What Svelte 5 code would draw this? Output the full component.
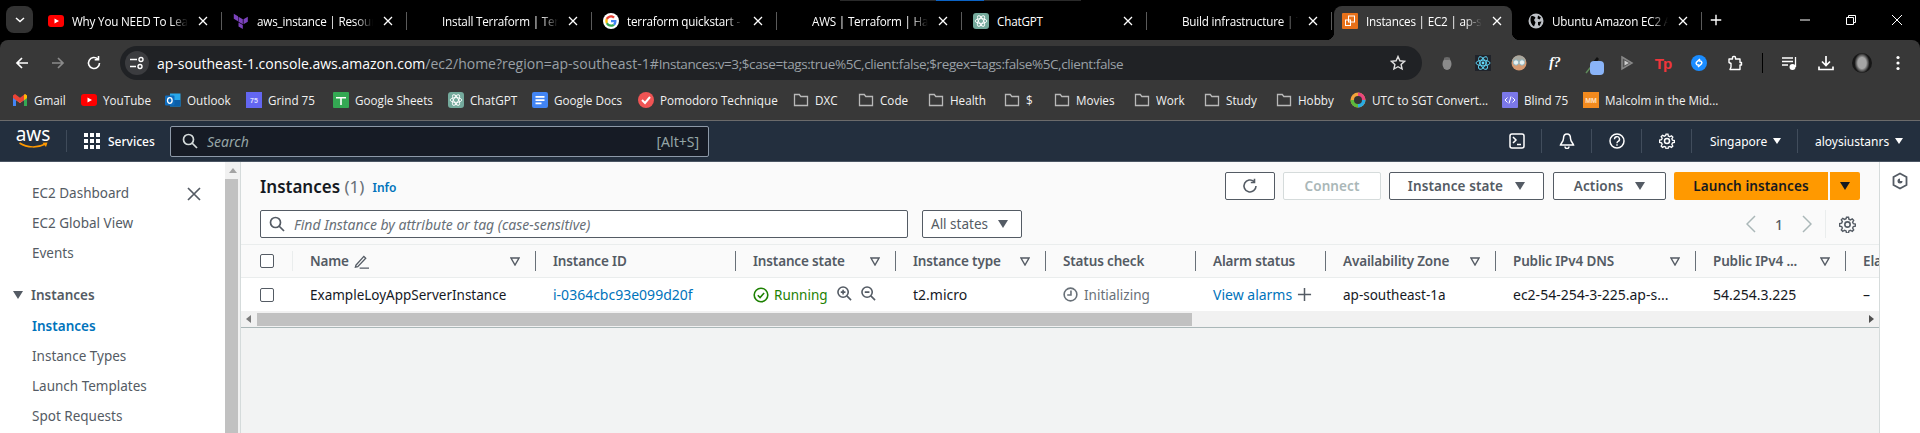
<script>
  const tabs = [
    { title: 'Why You NEED To Learn Terraform', icon: 'yt' },
    { title: 'aws_instance | Resources', icon: 'tf' },
    { title: 'Install Terraform | Terraform', icon: '' },
    { title: 'terraform quickstart - Google', icon: 'google' },
    { title: 'AWS | Terraform | HashiCorp', icon: '' },
    { title: 'ChatGPT', icon: 'gpt' },
    { title: 'Build infrastructure | Terraform', icon: '' },
    { title: 'Instances | EC2 | ap-southeast-1', icon: 'ec2', active: true },
    { title: 'Ubuntu Amazon EC2 AMI Locator', icon: 'globe' }
  ];

  const bookmarks = [
    { x: 12, label: 'Gmail', icon: 'gmail' },
    { x: 81, label: 'YouTube', icon: 'yt' },
    { x: 165, label: 'Outlook', icon: 'outlook' },
    { x: 246, label: 'Grind 75', icon: 'grind' },
    { x: 333, label: 'Google Sheets', icon: 'sheets' },
    { x: 448, label: 'ChatGPT', icon: 'gpt' },
    { x: 532, label: 'Google Docs', icon: 'docs' },
    { x: 638, label: 'Pomodoro Technique', icon: 'pomo' },
    { x: 793, label: 'DXC', icon: 'folder' },
    { x: 858, label: 'Code', icon: 'folder' },
    { x: 928, label: 'Health', icon: 'folder' },
    { x: 1004, label: '$', icon: 'folder' },
    { x: 1054, label: 'Movies', icon: 'folder' },
    { x: 1134, label: 'Work', icon: 'folder' },
    { x: 1204, label: 'Study', icon: 'folder' },
    { x: 1276, label: 'Hobby', icon: 'folder' },
    { x: 1350, label: 'UTC to SGT Convert...', icon: 'utc' },
    { x: 1502, label: 'Blind 75', icon: 'blind' },
    { x: 1583, label: 'Malcolm in the Mid...', icon: 'mm' }
  ];

  const sideTop = ['EC2 Dashboard', 'EC2 Global View', 'Events'];
  const sideInstances = ['Instances', 'Instance Types', 'Launch Templates', 'Spot Requests'];

  const columns = [
    { label: 'Name', filter: true, edit: true },
    { label: 'Instance ID' },
    { label: 'Instance state', filter: true },
    { label: 'Instance type', filter: true },
    { label: 'Status check' },
    { label: 'Alarm status' },
    { label: 'Availability Zone', filter: true },
    { label: 'Public IPv4 DNS', filter: true },
    { label: 'Public IPv4 ...', filter: true },
    { label: 'Elastic IP' }
  ];
</script>

{#snippet favicon(name)}
  <svg class="fav" viewBox="0 0 16 16">
    {#if name === 'yt'}
      <rect x="0" y="2" width="16" height="12" rx="3" fill="#f00" />
      <path d="M6.500 5.500 11 8l-4.500 2.500z" fill="#fff" />
    {:else if name === 'tf'}
      <path d="M5.500 3.700 9.800 6.200v5L5.500 8.700zM10.500 6.200l4.300-2.500v5l-4.300 2.500zM.8 .8l4.200 2.400v5L.8 5.800zM5.500 9.500l4.300 2.500v4l-4.300-2.500z" fill="#7b42bc" />
    {:else if name === 'google'}
      <circle cx="8" cy="8" r="8" fill="#fff" />
      <path d="M13.500 8.200c0-.4 0-.8-.1-1.200H8v2.300h3.100c-.1.800-.6 1.400-1.200 1.800l1.900 1.400c1.100-1 1.700-2.500 1.700-4.300z" fill="#4285f4" />
      <path d="M8 13.800c1.500 0 2.900-.5 3.800-1.400l-1.900-1.400c-.5.400-1.200.6-1.900.6-1.500 0-2.700-1-3.200-2.300l-1.900 1.500c1 1.800 2.900 3 5.100 3z" fill="#34a853" />
      <path d="M4.800 9.300c-.2-.8-.2-1.700 0-2.500L2.900 5.300c-.8 1.600-.8 3.600 0 5.500z" fill="#fbbc05" />
      <path d="M8 4.500c.9 0 1.600.3 2.200.9l1.700-1.700C10.900 2.800 9.500 2.200 8 2.200c-2.200 0-4.100 1.300-5.100 3.100l1.900 1.500C5.300 5.500 6.500 4.500 8 4.500z" fill="#ea4335" />
    {:else if name === 'gpt'}
      <rect width="16" height="16" rx="3" fill="#74aa9c" />
      <g fill="none" stroke="#fff" stroke-width=".9">
        <ellipse cx="8" cy="8" rx="5.800" ry="2.400" />
        <ellipse cx="8" cy="8" rx="5.800" ry="2.400" transform="rotate(60 8 8)" />
        <ellipse cx="8" cy="8" rx="5.800" ry="2.400" transform="rotate(120 8 8)" />
      </g>
    {:else if name === 'ec2'}
      <rect width="16" height="16" rx="1" fill="#e8711a" />
      <g fill="none" stroke="#fff" stroke-width="1">
        <rect x="6.500" y="3" width="6" height="6" />
        <rect x="3.500" y="7" width="5" height="5.500" />
      </g>
    {:else if name === 'globe'}
      <circle cx="8" cy="8" r="7.500" fill="#bdc1c6" />
      <path d="M3 3.500c2-1 3.500 0 4.500 1.200L6 7 7.500 9.500 6 13.500C3.500 12 1.500 8 3 3.500zM10 2.500l3 2-1.500 2-2-1zM10 9l3.500-.5-2 4.500-1.500-1z" fill="#000" />
    {:else if name === 'gmail'}
      <path d="M1 14V4.500L8 9.500l7-5V14h-3V8l-4 3-4-3v6z" fill="#c5c5c5" />
      <path d="M1 14V3.500l3 2.300V14z" fill="#4285f4" />
      <path d="M12 14V5.800l3-2.300V14z" fill="#34a853" />
      <path d="M1 3.500 3 2l5 3.800L13 2l2 1.500V6L8 11 1 6z" fill="#ea4335" />
      <path d="M13 2l2 1.500V6l-3 2.200V3z" fill="#fbbc05" />
    {:else if name === 'outlook'}
      <rect x="5" y="1.500" width="10.500" height="13" fill="#28a8ea" />
      <rect x="5" y="8" width="10.500" height="6.500" fill="#0a5ea8" />
      <rect x="0" y="3.500" width="9.500" height="10" rx="1" fill="#0f6cbd" />
      <ellipse cx="4.800" cy="8.500" rx="2.300" ry="2.800" fill="none" stroke="#fff" stroke-width="1.300" />
    {:else if name === 'grind'}
      <rect width="16" height="16" fill="#6366f1" />
      <text x="8" y="11" text-anchor="middle" class="ftext" fill="#dcdcff">75</text>
    {:else if name === 'sheets'}
      <rect width="16" height="16" rx="1" fill="#34a853" />
      <path d="M3 5h10v1.500H8.800V13H7.200V6.500H3z" fill="#fff" />
    {:else if name === 'docs'}
      <rect width="16" height="16" rx="2" fill="#4285f4" />
      <path d="M3.500 4h9v1.700h-9zM3.500 7.300h9V9h-9zM3.500 10.600h6v1.700h-6z" fill="#fff" />
    {:else if name === 'pomo'}
      <circle cx="8" cy="8" r="8" fill="#f05454" />
      <path d="M4 8l3 3 5-6" fill="none" stroke="#fff" stroke-width="2" />
    {:else if name === 'folder'}
      <path d="M1.500 13.500v-11h4.800l1.500 2h6.700v9z" fill="none" stroke="#b8b8b8" stroke-width="1.300" />
    {:else if name === 'utc'}
      <circle cx="8" cy="8" r="7.500" fill="#f2a33a" />
      <path d="M8 .5A7.500 7.500 0 0 1 15.500 8H11L8 5z" fill="#e8467c" />
      <path d="M15.500 8A7.500 7.500 0 0 1 8 15.500V11l3-3z" fill="#29abe2" />
      <path d="M8 15.500A7.500 7.500 0 0 1 .5 8H5l3 3z" fill="#5cb83c" />
      <circle cx="8" cy="8" r="4" fill="#333" />
    {:else if name === 'blind'}
      <rect width="16" height="16" rx="1" fill="#7b78e8" />
      <path d="M5.500 5.500 3 8l2.500 2.500M10.500 5.500 13 8l-2.500 2.500M9 4.500 7 11.500" fill="none" stroke="#fff" stroke-width="1" />
    {:else if name === 'mm'}
      <rect width="16" height="16" fill="#f28a1e" />
      <text x="8" y="11" text-anchor="middle" class="ftext" fill="#ffe0c0">MM</text>
    {/if}
  </svg>
{/snippet}

{#snippet gear(color)}
  <circle cx="8" cy="8" r="2.500" fill="none" stroke={color} stroke-width="1.500" />
  <path d="M7 .8h2l.4 2 1.500.7 1.800-1 1.400 1.400-1 1.800.7 1.500 2 .4v2l-2 .4-.7 1.500 1 1.800-1.400 1.400-1.800-1-1.500.7-.4 2H7l-.4-2-1.500-.7-1.800 1-1.400-1.400 1-1.800-.7-1.500-2-.4V7l2-.4.7-1.500-1-1.800L3.300 1.900l1.800 1 1.500-.7z" fill="none" stroke={color} stroke-width="1.400" transform="translate(.4 .4) scale(.95)" />
{/snippet}

<div class="page">
  <span class="progress"><i></i></span>
  <header class="tabstrip">
    <button class="collapse" aria-label="Tab search">
      <svg viewBox="0 0 10 6" width="10" height="6"><path d="M1 1l4 3.500L9 1" fill="none" stroke="#fff" stroke-width="1.500" /></svg>
    </button>
    {#each tabs as tab}
      <div class="tab" class:active={tab.active}>
        <span class="tabicon">{#if tab.icon}{@render favicon(tab.icon)}{/if}</span>
        <span class="tabtitle" class:short={tab.title.length < 10}>{tab.title}</span>
        <svg class="tabclose" viewBox="0 0 10 10"><path d="M1 1l8 8M9 1l-8 8" stroke="#fff" stroke-width="1.300" /></svg>
        {#if !tab.active}<span class="tabsep"></span>{/if}
      </div>
    {/each}
    <svg class="newtab" viewBox="0 0 16 16"><path d="M8 2v12M2 8h12" stroke="#fff" stroke-width="1.600" /></svg>
    <div class="winctl">
      <span><svg viewBox="0 0 12 12"><path d="M1 6h10" stroke="#fff" stroke-width="1" /></svg></span>
      <span><svg viewBox="0 0 12 12"><path d="M1.500 3.500h7v7h-7zM3.500 3.500v-2h7v7h-2" fill="none" stroke="#fff" stroke-width="1" /></svg></span>
      <span><svg viewBox="0 0 12 12"><path d="M1 1l10 10M11 1L1 11" stroke="#fff" stroke-width="1" /></svg></span>
    </div>
  </header>

  <div class="toolbar">
    <span class="tbtn"><svg viewBox="0 0 16 16"><path d="M14 8H3M8 3 3 8l5 5" fill="none" stroke="#fff" stroke-width="1.700" /></svg></span>
    <span class="tbtn"><svg viewBox="0 0 16 16"><path d="M2 8h11M8 3l5 5-5 5" fill="none" stroke="#8a8a8a" stroke-width="1.700" /></svg></span>
    <span class="tbtn"><svg viewBox="0 0 16 16"><path d="M13.500 8a5.500 5.500 0 1 1-1.700-4M12.500 1v3.800H8.700" fill="none" stroke="#fff" stroke-width="1.600" /></svg></span>
    <div class="omnibox">
      <span class="sitepill">
        <svg viewBox="0 0 16 16" width="16" height="16"><path d="M1 4.500h7M1 11.500h6" stroke="#fff" stroke-width="1.500" /><circle cx="12" cy="4.500" r="2" fill="none" stroke="#fff" stroke-width="1.400" /><circle cx="11" cy="11.500" r="2" fill="none" stroke="#fff" stroke-width="1.400" /></svg>
      </span>
      <span class="url"><b>ap-southeast-1.console.aws.amazon.com</b>/ec2/home?region=ap-southeast-1#<span class="hash">Instances:v=3;$case=tags:true%5C,client:false;$regex=tags:false%5C,client:false</span></span>
      <svg class="star" viewBox="0 0 16 16"><path d="M8 1.500l1.900 4.300 4.600.5-3.400 3.100 1 4.600L8 11.700l-4.100 2.300 1-4.600L1.500 6.300l4.600-.5z" fill="none" stroke="#e0e0e0" stroke-width="1.400" /></svg>
    </div>
    <div class="exts">
      <span class="tbtn"><svg viewBox="0 0 16 16"><ellipse cx="8" cy="9" rx="4.500" ry="6" fill="#8a8a8a" /><ellipse cx="8" cy="3.500" rx="3" ry="1.500" fill="#6a6a6a" /></svg></span>
      <span class="tbtn"><svg viewBox="0 0 16 16"><rect width="16" height="16" fill="#20232a" /><g fill="none" stroke="#61dafb" stroke-width=".9"><ellipse cx="8" cy="8" rx="7" ry="2.800" /><ellipse cx="8" cy="8" rx="7" ry="2.800" transform="rotate(60 8 8)" /><ellipse cx="8" cy="8" rx="7" ry="2.800" transform="rotate(120 8 8)" /></g><circle cx="8" cy="8" r="1.400" fill="#61dafb" /></svg></span>
      <span class="tbtn"><svg viewBox="0 0 16 16"><circle cx="8" cy="8" r="7.500" fill="#d69a72" /><path d="M1 6c1-4 4-5.500 7-5.500S14 2 15 6z" fill="#a8a8a0" /><circle cx="5" cy="7.500" r="2.700" fill="#e8f0f0" stroke="#7fb0c0" stroke-width=".8" /><circle cx="11" cy="7.500" r="2.700" fill="#e8f0f0" stroke="#7fb0c0" stroke-width=".8" /></svg></span>
      <span class="tbtn"><span class="whatfont">f?</span></span>
      <span class="tbtn dropper"><svg viewBox="0 0 20 20"><path d="M1 19 9 9" stroke="#5f8a5a" stroke-width="1.500" /><path d="M8 8l4-5 2 2-4 5z" fill="#111" /><rect x="5" y="7" width="14" height="14" rx="4" fill="#8ab4f8" /></svg></span>
      <span class="tbtn"><svg viewBox="0 0 16 16"><path d="M3 2l10 6-10 6z" fill="#555" stroke="#888" stroke-width="1.500" /><path d="M5.500 5.500 10 8l-4.500 2.500z" fill="#ccc" /></svg></span>
      <span class="tbtn"><span class="tp">Tp</span></span>
      <span class="tbtn"><svg viewBox="0 0 16 16"><circle cx="8" cy="8" r="8" fill="#1a8cff" /><path d="M9 4 5.500 7.300a1.600 1.600 0 0 0 2.300 2.200M7 12l3.500-3.300a1.600 1.600 0 0 0-2.300-2.200" fill="none" stroke="#fff" stroke-width="1.500" /></svg></span>
      <span class="tbtn"><svg viewBox="0 0 16 16"><path d="M2 4h3.500V2.500a1 1 0 0 1 1-1h1a1 1 0 0 1 1 1V4H13v3.500h1.500v2.500H13v4.500H3l1-2.500V8.500L2 7.500z" fill="none" stroke="#fff" stroke-width="1.400" stroke-linejoin="round" /></svg></span>
      <i class="extsep"></i>
      <span class="tbtn"><svg viewBox="0 0 16 16"><path d="M0 3h11M0 6.500h11M0 10h6" stroke="#fff" stroke-width="1.300" /><path d="M13.500 2v10" stroke="#fff" stroke-width="1.300" /><circle cx="10.500" cy="12" r="3" fill="#fff" /></svg></span>
      <span class="tbtn"><svg viewBox="0 0 16 16"><path d="M8 1v9M4 6.500 8 10.500l4-4" fill="none" stroke="#fff" stroke-width="1.700" /><path d="M1 11.500v3h14v-3" fill="none" stroke="#fff" stroke-width="1.700" /></svg></span>
      <span class="tbtn"><span class="avatar"></span></span>
      <span class="tbtn"><svg viewBox="0 0 16 16"><circle cx="8" cy="2.500" r="1.600" fill="#fff" /><circle cx="8" cy="8" r="1.600" fill="#fff" /><circle cx="8" cy="13.500" r="1.600" fill="#fff" /></svg></span>
    </div>
  </div>

  <div class="bookmarks">
    {#each bookmarks as mark, i}
      <span class="mark" style:width="{(bookmarks[i + 1]?.x ?? 1740) - mark.x}px">
        {@render favicon(mark.icon)}
        <span>{mark.label}</span>
      </span>
    {/each}
  </div>

  <nav class="awsnav">
    <div class="logo">
      <span>aws</span>
      <svg viewBox="0 0 30 7" width="31" height="7"><path d="M1 1c8 5 18 5 26 1" fill="none" stroke="#f90" stroke-width="1.500" /><path d="M24 .8 29 .5 27.500 5z" fill="#f90" /></svg>
    </div>
    <i class="navsep"></i>
    <div class="services">
      <svg viewBox="0 0 16 16" width="16" height="16"><path d="M0 0h4v4H0zM6 0h4v4H6zM12 0h4v4h-4zM0 6h4v4H0zM6 6h4v4H6zM12 6h4v4h-4zM0 12h4v4H0zM6 12h4v4H6zM12 12h4v4h-4z" fill="#fff" /></svg>
      <span>Services</span>
    </div>
    <div class="awssearch">
      <svg viewBox="0 0 16 16" width="16" height="16"><circle cx="6.500" cy="6.500" r="5" fill="none" stroke="#d5dbdb" stroke-width="1.700" /><path d="M10 10l5 5" stroke="#d5dbdb" stroke-width="1.700" /></svg>
      <span class="ph">Search</span>
      <span class="kbd">[Alt+S]</span>
    </div>
    <div class="navright">
      <span class="navicon"><svg viewBox="0 0 16 16"><rect x="1" y="1" width="14" height="14" rx="2" fill="none" stroke="#fff" stroke-width="1.500" /><path d="M4 4l3 3-3 3M8 11.500h4" fill="none" stroke="#fff" stroke-width="1.500" /></svg></span>
      <span class="navicon"><svg viewBox="0 0 16 16"><path d="M8 1c-2.500 0-3.500 2-3.500 4.500 0 3-2.500 4.500-3 6.500h13c-.5-2-3-3.500-3-6.500C11.500 3 10.500 1 8 1zM6 13.500a2 2 0 0 0 4 0" fill="none" stroke="#fff" stroke-width="1.500" /></svg></span>
      <span class="navicon"><svg viewBox="0 0 16 16"><circle cx="8" cy="8" r="7" fill="none" stroke="#fff" stroke-width="1.500" /><path d="M5.500 6.200a2.500 2.500 0 1 1 3.600 2.200c-.8.400-1.100.8-1.100 1.800M8 11.300v1.500" fill="none" stroke="#fff" stroke-width="1.400" /></svg></span>
      <span class="navicon"><svg viewBox="0 0 16 16">{@render gear('#fff')}</svg></span>
      <span class="navmenu region">Singapore <i class="tri"></i></span>
      <span class="navmenu user">aloysiustanrs <i class="tri"></i></span>
    </div>
  </nav>

  <div class="console">
    <aside class="sidenav">
      <div class="sidelist">
        <svg class="sideclose" viewBox="0 0 14 14"><path d="M1 1l12 12M13 1L1 13" stroke="#545b64" stroke-width="1.700" /></svg>
        {#each sideTop as item}
          <div class="sideitem">{item}</div>
        {/each}
        <div class="sidehead"><i class="tri dark"></i>Instances</div>
        {#each sideInstances as item, i}
          <div class="sideitem" class:current={i === 0}>{item}</div>
        {/each}
      </div>
      <div class="sidescroll">
        <svg viewBox="0 0 8 5" width="8" height="5"><path d="M0 5l4-5 4 5z" fill="#a3a3a3" /></svg>
        <span></span>
      </div>
    </aside>

    <main class="content">
      <div class="titlerow">
        <h1>Instances <span>(1)</span></h1>
        <a class="info" href="#info">Info</a>
        <div class="actions">
          <button class="btn refresh" aria-label="Refresh">
            <svg viewBox="0 0 16 16" width="16" height="16"><path d="M14 8a6 6 0 1 1-2-4.500M12.500 .8v3.700H8.800" fill="none" stroke="#545b64" stroke-width="1.600" /></svg>
          </button>
          <button class="btn connect">Connect</button>
          <button class="btn state">Instance state <i class="tri dark"></i></button>
          <button class="btn act">Actions <i class="tri dark"></i></button>
          <div class="launch">
            <button class="btn primary">Launch instances</button>
            <button class="btn primary caret" aria-label="Launch options"><i class="tri black"></i></button>
          </div>
        </div>
      </div>

      <div class="filterrow">
        <div class="find">
          <svg viewBox="0 0 16 16" width="16" height="16"><circle cx="6.500" cy="6.500" r="5" fill="none" stroke="#545b64" stroke-width="1.700" /><path d="M10 10l5 5" stroke="#545b64" stroke-width="1.700" /></svg>
          <span>Find Instance by attribute or tag (case-sensitive)</span>
        </div>
        <div class="states">All states <i class="tri dark"></i></div>
        <div class="pager">
          <svg viewBox="0 0 10 18" width="10" height="18"><path d="M9 1 1 9l8 8" fill="none" stroke="#aab7b8" stroke-width="1.500" /></svg>
          <span>1</span>
          <svg viewBox="0 0 10 18" width="10" height="18"><path d="M1 1l8 8-8 8" fill="none" stroke="#aab7b8" stroke-width="1.500" /></svg>
          <i class="pagersep"></i>
          <svg viewBox="0 0 16 16" width="17" height="17">{@render gear('#545b64')}</svg>
        </div>
      </div>

      <div class="table">
        <div class="tr thead">
          <div class="th check"><span class="box"></span></div>
          {#each columns as col}
            <div class="th">
              <span class="thlabel">{col.label}</span>
              {#if col.edit}
                <svg class="edit" viewBox="0 0 16 16" width="15" height="15"><path d="M2 12 10.500 2.500l2 2L4 13.500l-2.500.5zM6 15h10" fill="none" stroke="#545b64" stroke-width="1.400" /></svg>
              {/if}
              {#if col.filter}
                <svg class="filter" viewBox="0 0 10 9" width="10" height="9"><path d="M1 1h8L5 8z" fill="none" stroke="#545b64" stroke-width="1.400" /></svg>
              {/if}
              <i class="thsep"></i>
            </div>
          {/each}
        </div>
        <div class="tr tbody">
          <div class="td check"><span class="box"></span></div>
          <div class="td tight">ExampleLoyAppServerInstance</div>
          <div class="td"><a href="#id">i-0364cbc93e099d20f</a></div>
          <div class="td tight running">
            <svg viewBox="0 0 16 16" width="16" height="16"><circle cx="8" cy="8" r="6.800" fill="none" stroke="#1d8102" stroke-width="1.600" /><path d="M4.800 8.200l2.300 2.300 4-4.500" fill="none" stroke="#1d8102" stroke-width="1.600" /></svg>
            <span>Running</span>
            <svg class="zoom first" viewBox="0 0 16 16" width="15" height="15"><circle cx="6.500" cy="6.500" r="5.500" fill="none" stroke="#545b64" stroke-width="1.700" /><path d="M10.500 10.500 15 15M4 6.500h5M6.500 4v5" fill="none" stroke="#545b64" stroke-width="1.700" /></svg>
            <svg class="zoom" viewBox="0 0 16 16" width="15" height="15"><circle cx="6.500" cy="6.500" r="5.500" fill="none" stroke="#545b64" stroke-width="1.700" /><path d="M10.500 10.500 15 15M4 6.500h5" fill="none" stroke="#545b64" stroke-width="1.700" /></svg>
          </div>
          <div class="td">t2.micro</div>
          <div class="td tight muted">
            <svg viewBox="0 0 16 16" width="15" height="15"><circle cx="8" cy="8" r="6.800" fill="none" stroke="#687078" stroke-width="1.700" /><path d="M8.500 3.800v4.700H4.500" fill="none" stroke="#687078" stroke-width="1.700" /></svg>
            <span>Initializing</span>
          </div>
          <div class="td alarms">
            <a href="#alarms">View alarms</a>
            <svg viewBox="0 0 16 16" width="15" height="15"><path d="M8 1v14M1 8h14" stroke="#545b64" stroke-width="1.600" /></svg>
          </div>
          <div class="td tight">ap-southeast-1a</div>
          <div class="td">ec2-54-254-3-225.ap-s...</div>
          <div class="td">54.254.3.225</div>
          <div class="td">–</div>
        </div>
      </div>
      <div class="hscroll">
        <svg viewBox="0 0 5 8" width="5" height="8"><path d="M5 0 0 4l5 4z" fill="#7a7a7a" /></svg>
        <span class="thumb"></span>
        <svg class="right" viewBox="0 0 5 8" width="5" height="8"><path d="M0 0l5 4-5 4z" fill="#505050" /></svg>
      </div>
    </main>

    <aside class="tools">
      <svg viewBox="0 0 16 18" width="16" height="18"><path d="M8 1.500 14.500 5v8L8 16.500 1.500 13V5z" fill="none" stroke="#545b64" stroke-width="1.800" /><path d="M8 6.500a2.500 2.500 0 1 0 2.500 2.500H8z" fill="#545b64" /></svg>
    </aside>
  </div>
</div>

<style>
  :global(body) {
    background: #fff;
  }

  .page {
    position: relative;
    width: 1920px;
    height: 433px;
    overflow: hidden;
    display: flex;
    flex-direction: column;
    background: #000;
    font-family: "Noto Sans", sans-serif;
    font-size: 14px;
  }

  .progress {
    position: absolute;
    top: 0;
    left: 840px;
    width: 241px;
    height: 1px;
    background: #2a2a2a;
  }

  .progress i {
    display: block;
    width: 48px;
    height: 1px;
    margin-left: 96px;
    background: #0b63c5;
  }

  /* browser chrome */
  .tabstrip {
    height: 40px;
    flex: none;
    display: flex;
    align-items: flex-start;
    color: #fff;
    font-family: "Open Sans", sans-serif;
    font-size: 11.7px;
    letter-spacing: -0.2px;
  }

  .collapse {
    width: 27px;
    height: 27px;
    margin: 6px 4px 0 6px;
    padding: 0;
    border: 0;
    border-radius: 8px;
    background: #333;
    display: flex;
    align-items: center;
    justify-content: center;
  }

  .tab {
    width: 185px;
    height: 34px;
    margin-top: 6px;
    padding: 0 0 4px 11px;
    box-sizing: border-box;
    flex: none;
    display: flex;
    align-items: center;
    position: relative;
  }

  .tab.active {
    width: 178px;
    margin: 6px 5px 0 2px;
    padding-left: 8px;
    background: #383838;
    border-radius: 8px 8px 0 0;
  }

  .tab.active::before,
  .tab.active::after {
    content: "";
    position: absolute;
    bottom: 0;
    width: 8px;
    height: 8px;
  }

  .tab.active::before {
    left: -8px;
    background: radial-gradient(circle at 0 0, #000 8px, #383838 8.5px);
  }

  .tab.active::after {
    right: -8px;
    background: radial-gradient(circle at 100% 0, #000 8px, #383838 8.5px);
  }

  .tabicon {
    width: 16px;
    height: 16px;
    flex: none;
    display: block;
  }

  .fav {
    width: 16px;
    height: 16px;
    flex: none;
    display: block;
  }

  .ftext {
    font: 700 7px "Liberation Sans", sans-serif;
  }

  .tabtitle {
    width: 116px;
    margin-left: 8px;
    flex: none;
    white-space: nowrap;
    overflow: hidden;
    -webkit-mask-image: linear-gradient(90deg, #000 85%, transparent);
    mask-image: linear-gradient(90deg, #000 85%, transparent);
  }

  .tabtitle.short {
    -webkit-mask-image: none;
    mask-image: none;
  }

  .tabclose {
    width: 10px;
    height: 10px;
    margin-left: 10px;
    flex: none;
  }

  .tabsep {
    width: 1px;
    height: 18px;
    margin-left: 13px;
    flex: none;
    background: #5a5a5a;
  }

  .newtab {
    width: 14px;
    height: 14px;
    margin: 13px 0 0 7px;
    flex: none;
  }

  .winctl {
    display: flex;
    margin-left: auto;
  }

  .winctl span {
    width: 46px;
    height: 40px;
    display: flex;
    align-items: center;
    justify-content: center;
  }

  .winctl svg {
    width: 12px;
    height: 12px;
  }

  .toolbar {
    height: 40px;
    flex: none;
    padding: 6px 0 0 4px;
    box-sizing: border-box;
    display: flex;
    background: #383838;
    border-radius: 8px 8px 0 0;
  }

  .tbtn {
    width: 36px;
    height: 34px;
    flex: none;
    display: flex;
    align-items: center;
    justify-content: center;
  }

  .tbtn svg {
    width: 16px;
    height: 16px;
    overflow: visible;
  }

  .tbtn.dropper svg {
    width: 20px;
    height: 20px;
    margin-left: 8px;
    margin-top: 2px;
  }

  .omnibox {
    width: 1302px;
    height: 34px;
    margin-left: 8px;
    flex: none;
    padding-left: 5px;
    box-sizing: border-box;
    display: flex;
    align-items: center;
    background: #202225;
    border-radius: 17px;
  }

  .sitepill {
    width: 24px;
    height: 24px;
    flex: none;
    border-radius: 50%;
    background: #3b3c3f;
    display: flex;
    align-items: center;
    justify-content: center;
  }

  .url {
    margin-left: 8px;
    font-family: "Open Sans", sans-serif;
    font-size: 14px;
    color: #9aa0a6;
    white-space: nowrap;
  }

  .url b {
    font-weight: 400;
    color: #fff;
  }

  .hash {
    font-size: 13.5px;
    letter-spacing: -0.41px;
  }

  .star {
    width: 16px;
    height: 16px;
    margin-left: auto;
    margin-right: 16px;
    flex: none;
  }

  .exts {
    display: flex;
    margin-left: 7px;
  }

  .whatfont {
    color: #fff;
    font: italic 700 14px "Liberation Serif", serif;
  }

  .tp {
    color: #f0353b;
    font: 700 15px "Liberation Sans", sans-serif;
    letter-spacing: -1px;
  }

  .extsep {
    width: 1px;
    height: 20px;
    margin: 7px 9px 0;
    background: #000;
  }

  .avatar {
    width: 20px;
    height: 20px;
    border-radius: 50%;
    background: radial-gradient(ellipse 38% 50% at 50% 50%, #a5a5a5 0 55%, #161616 100%);
  }

  .bookmarks {
    height: 41px;
    flex: none;
    padding-left: 12px;
    box-sizing: border-box;
    display: flex;
    align-items: center;
    background: #383838;
    border-bottom: 1px solid #6b6b6b;
    color: #f1f1f1;
    font-family: "Open Sans", sans-serif;
    font-size: 11.7px;
  }

  .mark {
    flex: none;
    display: flex;
    align-items: center;
    gap: 6px;
    white-space: nowrap;
  }

  /* aws console nav */
  .awsnav {
    height: 41px;
    flex: none;
    box-sizing: border-box;
    display: flex;
    align-items: center;
    background: #232f3e;
    border-bottom: 1px solid #4a5563;
    color: #fff;
  }

  .logo {
    width: 66px;
    flex: none;
    display: flex;
    flex-direction: column;
    align-items: center;
    line-height: 14px;
    font-size: 19px;
    padding-bottom: 4px;
  }

  .logo span {
    height: 14px;
    margin-top: -2px;
  }

  .logo svg {
    margin-top: 1px;
  }

  .navsep {
    width: 1px;
    height: 22px;
    background: #3f4b5a;
    flex: none;
  }

  .services {
    width: 103px;
    flex: none;
    padding-left: 17px;
    box-sizing: border-box;
    display: flex;
    align-items: center;
    gap: 8px;
    font-size: 12px;
    font-weight: 500;
  }

  .awssearch {
    width: 539px;
    height: 31px;
    flex: none;
    padding: 0 9px 0 11px;
    box-sizing: border-box;
    display: flex;
    align-items: center;
    background: #161b25;
    border: 1px solid #8d99a8;
    border-radius: 2px;
    color: #95a5a6;
  }

  .ph {
    margin-left: 9px;
    font-style: italic;
    font-size: 14px;
  }

  .kbd {
    margin-left: auto;
  }

  .navright {
    margin-left: auto;
    display: flex;
    align-items: center;
  }

  .navicon {
    width: 50px;
    height: 24px;
    box-sizing: border-box;
    display: flex;
    align-items: center;
    justify-content: center;
    border-right: 1px solid #414d5c;
  }

  .navicon svg {
    width: 16px;
    height: 16px;
  }

  .navmenu {
    height: 24px;
    box-sizing: border-box;
    display: flex;
    align-items: center;
    gap: 6px;
    font-size: 12px;
  }

  .region {
    width: 106px;
    padding-left: 18px;
    border-right: 1px solid #414d5c;
  }

  .user {
    width: 122px;
    padding-left: 17px;
  }

  .tri {
    display: inline-block;
    width: 0;
    height: 0;
    flex: none;
    border: 5px solid transparent;
    border-top: 8px solid #fff;
    border-bottom: 0;
  }

  .navmenu .tri {
    border-width: 6px 4px 0;
    border-top-color: #fff;
    border-left-color: transparent;
    border-right-color: transparent;
  }

  .tri.dark {
    border-top-color: #545b64;
  }

  .tri.black {
    border-top-color: #16191f;
  }

  /* console body */
  .console {
    flex: 1;
    min-height: 0;
    display: flex;
    background: #f2f3f3;
  }

  .sidenav {
    width: 241px;
    flex: none;
    box-sizing: border-box;
    display: flex;
    background: #fff;
    border-right: 1px solid #d5dbdb;
    color: #545b64;
    font-size: 13.5px;
  }

  .sidelist {
    width: 225px;
    flex: none;
    padding-top: 16px;
    box-sizing: border-box;
    position: relative;
  }

  .sideclose {
    position: absolute;
    top: 25px;
    left: 187px;
    width: 14px;
    height: 14px;
  }

  .sideitem {
    height: 30px;
    padding-left: 32px;
    line-height: 30px;
  }

  .sideitem.current {
    color: #0073bb;
    font-weight: 600;
  }

  .sidehead {
    height: 30px;
    margin: 12px 0 1px;
    padding-left: 13px;
    display: flex;
    align-items: center;
    gap: 8px;
    font-weight: 600;
  }

  .sidescroll {
    flex: 1;
    display: flex;
    flex-direction: column;
    align-items: center;
    background: #f1f1f1;
    padding-top: 6px;
  }

  .sidescroll span {
    width: 13px;
    margin: 6px 2px 0 0;
    flex: 1;
    background: #c1c1c1;
  }

  .content {
    flex: 1;
    min-width: 0;
    display: flex;
    flex-direction: column;
  }

  .titlerow {
    height: 38px;
    padding: 10px 19px 0;
    box-sizing: border-box;
    display: flex;
    align-items: center;
    background: #fafafa;
  }

  h1 {
    margin: 0;
    font-size: 17px;
    font-weight: 600;
    color: #16191f;
  }

  h1 span {
    font-weight: 400;
    color: #687078;
  }

  .info {
    margin-left: 8px;
    margin-top: 3px;
    color: #0073bb;
    font-size: 12px;
    font-weight: 600;
    text-decoration: none;
  }

  .actions {
    margin-left: auto;
    display: flex;
    gap: 8px;
  }

  .btn {
    height: 28px;
    padding: 0;
    box-sizing: border-box;
    display: flex;
    align-items: center;
    justify-content: center;
    gap: 12px;
    background: #fff;
    border: 1px solid #545b64;
    border-radius: 2px;
    color: #545b64;
    font: 600 13.5px "Noto Sans", sans-serif;
    letter-spacing: 0.1px;
  }

  .refresh {
    width: 50px;
  }

  .connect {
    width: 98px;
    border-color: #d5dbdb;
    color: #aab7b8;
  }

  .state {
    width: 155px;
  }

  .act {
    width: 113px;
    margin-left: 1px;
  }

  .launch {
    display: flex;
    gap: 2px;
  }

  .primary {
    width: 154px;
    background: #f90;
    border: 0;
    border-radius: 2px 0 0 2px;
    color: #16191f;
  }

  .primary.caret {
    width: 30px;
    border-radius: 0 2px 2px 0;
  }

  .filterrow {
    height: 38px;
    padding: 10px 19px 0;
    box-sizing: border-box;
    display: flex;
    align-items: center;
    background: #fafafa;
  }

  .find {
    width: 648px;
    height: 28px;
    padding-left: 8px;
    box-sizing: border-box;
    display: flex;
    align-items: center;
    gap: 9px;
    background: #fff;
    border: 1px solid #545b64;
    border-radius: 2px;
    color: #687078;
    font-style: italic;
  }

  .states {
    width: 100px;
    height: 28px;
    margin-left: 14px;
    padding-left: 8px;
    box-sizing: border-box;
    display: flex;
    align-items: center;
    gap: 10px;
    background: #fff;
    border: 1px solid #545b64;
    border-radius: 2px;
    color: #545b64;
    font-size: 13.5px;
  }

  .pager {
    margin-left: auto;
    padding-right: 4px;
    display: flex;
    align-items: center;
    color: #545b64;
    font-size: 14px;
    font-weight: 500;
  }

  .pager span {
    width: 46px;
    text-align: center;
  }

  .pagersep {
    width: 1px;
    height: 28px;
    margin: 0 13px 0 13px;
    background: #eaeded;
  }

  .table {
    padding-top: 6px;
    background: #fafafa;
    overflow: hidden;
    flex: none;
  }

  .tr {
    display: grid;
    grid-template-columns: 52px 243px 200px 160px 150px 150px 130px 170px 200px 150px 100px;
    width: 1705px;
  }

  .thead {
    height: 34px;
    box-sizing: border-box;
    background: #fafafa;
    border-top: 1px solid #eaeded;
    border-bottom: 1px solid #eaeded;
  }

  .tbody {
    height: 33px;
    background: #fff;
  }

  .th,
  .td {
    padding-left: 17px;
    box-sizing: border-box;
    display: flex;
    align-items: center;
    white-space: nowrap;
    min-width: 0;
  }

  .th {
    color: #545b64;
    font-size: 13.5px;
    font-weight: 600;
    letter-spacing: -0.15px;
  }

  .check {
    padding-left: 19px;
  }

  .th.check {
    border-right: 1px solid #eaeded;
    height: 20px;
    margin-top: 6px;
  }

  .box {
    width: 14px;
    height: 14px;
    box-sizing: border-box;
    background: #fff;
    border: 1px solid #545b64;
    border-radius: 2px;
  }

  .edit {
    margin-left: 5px;
  }

  .filter {
    margin-left: auto;
    margin-right: 15px;
  }

  .thsep {
    width: 1px;
    height: 20px;
    margin-left: auto;
    background: #687078;
    flex: none;
  }

  .filter + .thsep {
    margin-left: 0;
  }

  .td {
    color: #16191f;
  }

  .td.tight {
    font-size: 13.5px;
  }

  .td a {
    color: #0073bb;
    text-decoration: none;
  }

  .td.running {
    color: #1d8102;
    gap: 5px;
  }

  .zoom {
    margin-left: 4px;
    margin-top: -3px;
  }

  .zoom.first {
    margin-left: 4px;
  }

  .td.muted {
    color: #687078;
    gap: 6px;
  }

  .alarms {
    gap: 5px;
  }

  .hscroll {
    height: 16px;
    padding-left: 5px;
    box-sizing: border-box;
    display: flex;
    align-items: center;
    background: #f1f1f1;
    flex: none;
  }

  .thumb {
    width: 935px;
    height: 13px;
    margin-left: 6px;
    margin-top: 1px;
    background: #c1c1c1;
  }

  .hscroll .right {
    margin-left: auto;
    margin-right: 5px;
  }

  .content::after {
    content: "";
    height: 1px;
    background: #aab7b8;
    flex: none;
  }

  .tools {
    width: 41px;
    flex: none;
    box-sizing: border-box;
    display: flex;
    justify-content: center;
    align-items: flex-start;
    padding-top: 10px;
    background: #fff;
    border-left: 1px solid #d5dbdb;
  }
</style>
